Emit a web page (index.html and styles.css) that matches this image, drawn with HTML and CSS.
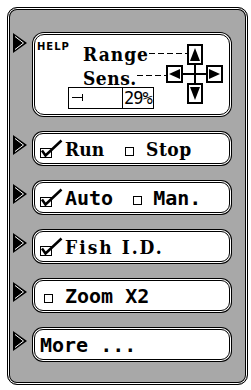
FILE: index.html
```html
<!DOCTYPE html>
<html>
<head>
<meta charset="utf-8">
<link rel="stylesheet" href="styles.css">
</head>
<body>
<div class="panel">
  <div class="row row-help">
    <svg class="pointer" width="14" height="20" viewBox="0 0 14 20"><path d="M0 0L14 10L0 20Z" fill="#000"/><path d="M2 3.5L10.5 10L2 16.5" fill="none" stroke="#fff" stroke-width="1"/></svg>
    <div class="help">
      <div class="help-range"><span class="help-label">HELP</span><span class="big serif">Range</span><span class="dash dash-range"></span></div>
      <div class="key key-up"><svg width="10" height="13" viewBox="0 0 10 13"><path d="M5 0L10 13H0Z" fill="#000"/></svg></div>
      <div class="help-sens"><span class="big serif">Sens.</span><span class="dash dash-sens"></span></div>
      <div class="key key-left"><svg width="11" height="10" viewBox="0 0 11 10"><path d="M0 5L11 0V10Z" fill="#000"/></svg></div>
      <div class="cross"></div>
      <div class="key key-right"><svg width="11" height="10" viewBox="0 0 11 10"><path d="M11 5L0 0V10Z" fill="#000"/></svg></div>
      <div class="meter"><span class="meter-fill"><span class="meter-tick"></span></span><span class="meter-val">29%</span></div>
      <div class="key key-down"><svg width="10" height="13" viewBox="0 0 10 13"><path d="M5 13L10 0H0Z" fill="#000"/></svg></div>
    </div>
  </div>

  <div class="row">
    <svg class="pointer" width="14" height="20" viewBox="0 0 14 20"><path d="M0 0L14 10L0 20Z" fill="#000"/><path d="M2 3.5L10.5 10L2 16.5" fill="none" stroke="#fff" stroke-width="1"/></svg>
    <div class="btn">
      <svg class="check" width="23" height="19" viewBox="0 0 23 19"><rect x="0.5" y="9.5" width="11" height="9" fill="#fff" stroke="#000"/><path d="M2 11.5L5.5 16.5L21.5 1.5" fill="none" stroke="#000" stroke-width="2.5"/></svg>
      <span class="txt serif">Run</span><span class="sq sq-run"></span><span class="txt serif stop">Stop</span>
    </div>
  </div>

  <div class="row">
    <svg class="pointer" width="14" height="20" viewBox="0 0 14 20"><path d="M0 0L14 10L0 20Z" fill="#000"/><path d="M2 3.5L10.5 10L2 16.5" fill="none" stroke="#fff" stroke-width="1"/></svg>
    <div class="btn">
      <svg class="check" width="23" height="19" viewBox="0 0 23 19"><rect x="0.5" y="9.5" width="11" height="9" fill="#fff" stroke="#000"/><path d="M2 11.5L5.5 16.5L21.5 1.5" fill="none" stroke="#000" stroke-width="2.5"/></svg>
      <span class="txt sans">Auto</span><span class="sq sq-auto"></span><span class="txt sans">Man.</span>
    </div>
  </div>

  <div class="row">
    <svg class="pointer" width="14" height="20" viewBox="0 0 14 20"><path d="M0 0L14 10L0 20Z" fill="#000"/><path d="M2 3.5L10.5 10L2 16.5" fill="none" stroke="#fff" stroke-width="1"/></svg>
    <div class="btn">
      <svg class="check" width="23" height="19" viewBox="0 0 23 19"><rect x="0.5" y="9.5" width="11" height="9" fill="#fff" stroke="#000"/><path d="M2 11.5L5.5 16.5L21.5 1.5" fill="none" stroke="#000" stroke-width="2.5"/></svg>
      <span class="txt serif fish">Fish I.D.</span>
    </div>
  </div>

  <div class="row">
    <svg class="pointer" width="14" height="20" viewBox="0 0 14 20"><path d="M0 0L14 10L0 20Z" fill="#000"/><path d="M2 3.5L10.5 10L2 16.5" fill="none" stroke="#fff" stroke-width="1"/></svg>
    <div class="btn">
      <span class="sq sq-zoom"></span><span class="txt sans">Zoom X2</span>
    </div>
  </div>

  <div class="row">
    <svg class="pointer" width="14" height="20" viewBox="0 0 14 20"><path d="M0 0L14 10L0 20Z" fill="#000"/><path d="M2 3.5L10.5 10L2 16.5" fill="none" stroke="#fff" stroke-width="1"/></svg>
    <div class="btn">
      <span class="txt sans">More ...</span>
    </div>
  </div>
</div>
</body>
</html>
```

FILE: styles.css
```css
html, body {
  margin: 0;
  background: #fff;
}

.panel {
  box-sizing: border-box;
  width: 241px;
  height: 378px;
  margin: 7px 0 0 7px;
  padding: 26px 0 0 5px;
  background: #a8a8a8;
  border: 1px solid #000;
  border-radius: 10px;
  box-shadow: inset 0 0 0 1px #fff, inset 0 0 0 2px #000;
  display: flex;
  flex-direction: column;
  gap: 18px;
}

.row {
  display: flex;
  align-items: flex-start;
  gap: 7px;
}

.pointer {
  display: block;
  flex: none;
  margin-top: 2px;
}

.row-help .pointer {
  margin-top: -1px;
}

.help,
.btn {
  box-sizing: border-box;
  width: 196px;
  background: #fff;
  border: 1px solid #000;
  box-shadow: 0 0 0 1px #fff, 0 0 0 2px #000;
}

.help {
  height: 81px;
  border-radius: 10px;
  padding: 9px 0 0 2px;
  display: grid;
  grid-template-columns: 129px 17px 4px 16px 3px 17px;
  grid-template-rows: 21px 18px 21px;
}

.btn {
  height: 31px;
  border-radius: 9px;
  padding: 0 0 0 5px;
  display: flex;
  align-items: center;
}

.serif {
  font-family: "DejaVu Serif", "Liberation Serif", serif;
  font-stretch: condensed;
  font-weight: bold;
}

.sans {
  font-family: "DejaVu Sans Mono", monospace;
  font-weight: bold;
}

.big {
  font-size: 19px;
  line-height: 16px;
}

.txt {
  font-size: 19px;
  line-height: 20px;
  white-space: pre;
  color: #000;
}

.txt.sans {
  font-size: 20px;
}

.stop { letter-spacing: 0.5px; }
.fish { letter-spacing: 2px; }

.check {
  display: block;
  flex: none;
  margin-right: 2px;
}

.sq {
  flex: none;
  box-sizing: border-box;
  width: 9px;
  height: 9px;
  border: 1px solid #000;
  align-self: center;
  margin-top: 5px;
}

.sq-run { margin-left: 21px; margin-right: 12px; }
.sq-auto { margin-left: 20px; margin-right: 11px; }
.sq-zoom { margin-left: 4px; margin-right: 12px; }

/* help panel */
.help-range {
  grid-column: 1 / 4;
  grid-row: 1;
  display: flex;
  align-items: flex-start;
}

.help-label {
  width: 46px;
  flex: none;
  margin-top: -2px;
  font-family: "DejaVu Sans", sans-serif;
  font-weight: bold;
  font-size: 10px;
  line-height: 10px;
  letter-spacing: 1px;
}

.help-range .big {
  margin-top: 2px;
  letter-spacing: 1px;
}

.dash {
  flex: 1;
  height: 1px;
  background: repeating-linear-gradient(to right, #000 0 6px, transparent 6px 9px);
}

.dash-range { margin-top: 9px; }

.help-sens {
  grid-column: 1;
  grid-row: 2;
  padding-left: 46px;
  display: flex;
  align-items: flex-start;
}

.help-sens .big {
  margin-top: 5px;
  letter-spacing: 0.5px;
}

.dash-sens { margin-top: 10px; }

.key {
  box-sizing: border-box;
  border: 2px solid #000;
  background: #fff;
  display: flex;
  align-items: center;
  justify-content: center;
}

.key svg { display: block; }

.key-up { grid-column: 4; grid-row: 1; }
.key-left { grid-column: 2; grid-row: 2; }
.key-right { grid-column: 6; grid-row: 2; }
.key-down { grid-column: 4; grid-row: 3; }

.cross {
  grid-column: 4;
  grid-row: 2;
  position: relative;
}

.cross::before {
  content: "";
  position: absolute;
  left: 7px;
  top: 0;
  bottom: 0;
  width: 2px;
  background: #000;
}

.cross::after {
  content: "";
  position: absolute;
  left: -4px;
  right: -3px;
  top: 8px;
  height: 2px;
  background: #000;
}

.meter {
  grid-column: 1;
  grid-row: 3;
  box-sizing: border-box;
  margin: 4px 0 0 31px;
  width: 86px;
  height: 22px;
  border: 1px solid #000;
  display: flex;
}

.meter-fill {
  width: 53px;
  border-right: 1px solid #000;
  position: relative;
}

.meter-tick {
  position: absolute;
  left: 3px;
  top: 9px;
  width: 10px;
  height: 1px;
  background: #000;
}

.meter-tick::after {
  content: "";
  position: absolute;
  right: -1px;
  top: -3px;
  width: 1px;
  height: 7px;
  background: #000;
}

.meter-val {
  flex: 1;
  padding-left: 1px;
  font-family: "DejaVu Sans Mono", monospace;
  font-size: 17px;
  line-height: 20px;
  letter-spacing: -1px;
}
```
